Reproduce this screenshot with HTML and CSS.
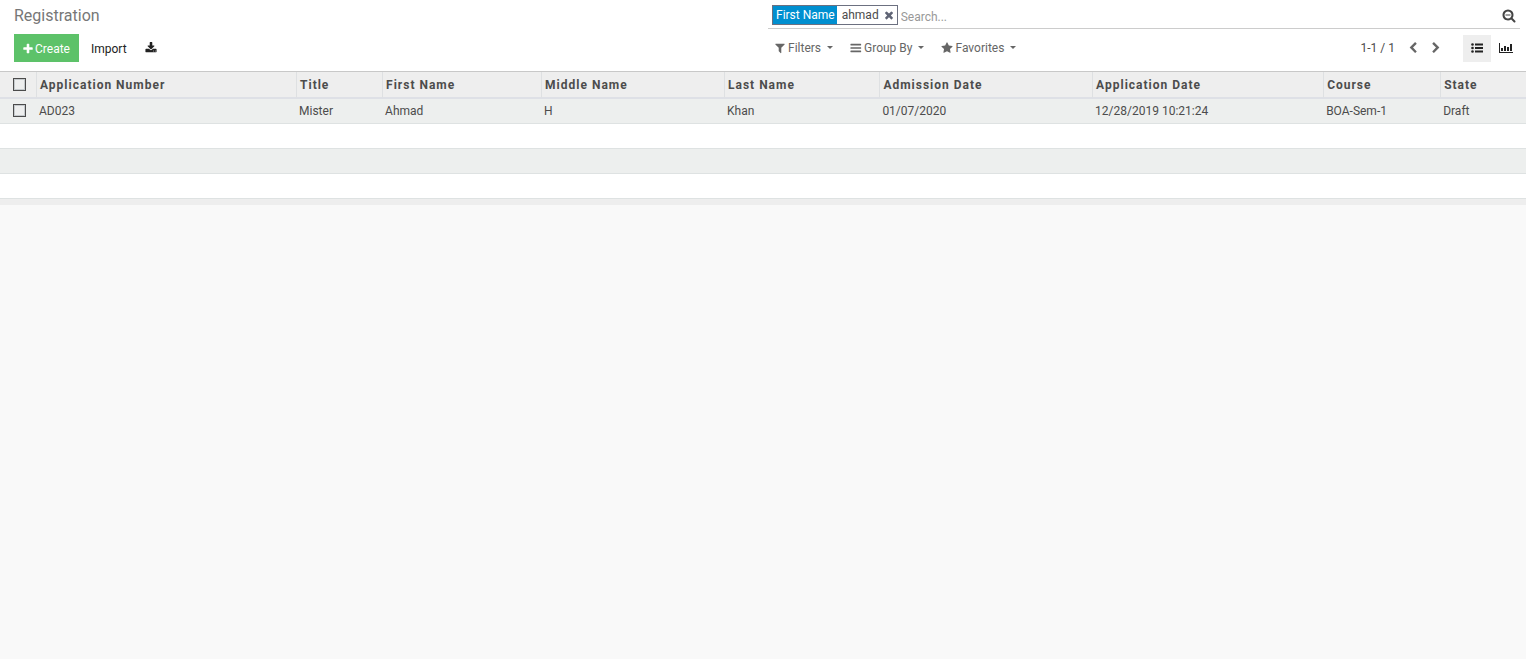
FILE: index.html
```html
<!DOCTYPE html>
<html lang="en">
<head>
<meta charset="utf-8">
<title>Registration</title>
<link rel="stylesheet" href="styles.css">
</head>
<body>
<header class="control-panel">
  <h1 class="title">Registration</h1>
  <div class="search">
    <div class="facet">
      <span class="facet-label">First Name</span>
      <span class="facet-value">ahmad</span>
      <button class="facet-remove" type="button" aria-label="Remove filter"><svg class="icon" viewBox="0 0 1792 1792"><path d="M1490 1322q0 40-28 68l-136 136q-28 28-68 28t-68-28l-294-294-294 294q-28 28-68 28t-68-28l-136-136q-28-28-28-68t28-68l294-294-294-294q-28-28-28-68t28-68l136-136q28-28 68-28t68 28l294 294 294-294q28-28 68-28t68 28l136 136q28 28 28 68t-28 68l-294 294 294 294q28 28 28 68z"/></svg></button>
    </div>
    <input class="search-input" type="text" placeholder="Search..." aria-label="Search">
    <button class="search-toggle" type="button" aria-label="Hide search options"><svg class="icon icon-large" viewBox="0 0 1792 1792"><path d="M1088 736v64q0 13-9.500 22.500t-22.500 9.500h-576q-13 0-22.500-9.500t-9.500-22.500v-64q0-13 9.500-22.500t22.500-9.500h576q13 0 22.500 9.500t9.500 22.500zm128 32q0-185-131.500-316.500t-316.500-131.500-316.500 131.500-131.500 316.500 131.500 316.500 316.500 131.500 316.500-131.500 131.500-316.500zm512 832q0 53-37.500 90.500t-90.500 37.500q-54 0-90-38l-343-342q-179 124-399 124-143 0-273.500-55.500t-225-150-150-225-55.500-273.500 55.500-273.500 150-225 225-150 273.500-55.500 273.500 55.500 225 150 150 225 55.500 273.500q0 220-124 399l343 343q37 37 37 90z"/></svg></button>
  </div>
  <div class="actions">
    <button class="btn btn-create" type="button"><svg class="icon" viewBox="0 0 1792 1792"><path d="M1600 736v192q0 40-28 68t-68 28h-416v416q0 40-28 68t-68 28h-192q-40 0-68-28t-28-68v-416h-416q-40 0-68-28t-28-68v-192q0-40 28-68t68-28h416v-416q0-40 28-68t68-28h192q40 0 68 28t28 68v416h416q40 0 68 28t28 68z"/></svg>Create</button>
    <button class="btn" type="button">Import</button>
    <button class="btn" type="button" aria-label="Export"><svg class="icon" viewBox="0 0 1792 1792"><path d="M1344 1344q0-26-19-45t-45-19-45 19-19 45 19 45 45 19 45-19 19-45zm256 0q0-26-19-45t-45-19-45 19-19 45 19 45 45 19 45-19 19-45zm128-224v320q0 40-28 68t-68 28h-1472q-40 0-68-28t-28-68v-320q0-40 28-68t68-28h465l135 136q58 56 136 56t136-56l136-136h464q40 0 68 28t28 68zm-325-569q17 41-14 70l-448 448q-18 19-45 19t-45-19l-448-448q-31-29-14-70 17-39 59-39h256v-448q0-26 19-45t45-19h256q26 0 45 19t19 45v448h256q42 0 59 39z"/></svg></button>
  </div>
  <div class="options">
    <div class="filters">
      <button class="dropdown" type="button"><svg class="icon" viewBox="0 0 1792 1792"><path d="M1595 295q17 41-14 70l-493 493v742q0 42-39 59-13 5-25 5-27 0-45-19l-256-256q-19-19-19-45v-486l-493-493q-31-29-14-70 17-39 59-39h1280q42 0 59 39z"/></svg>Filters<span class="caret"></span></button>
      <button class="dropdown" type="button"><svg class="icon" viewBox="0 0 1792 1792"><rect x="64" y="256" width="1600" height="256" rx="64"/><rect x="64" y="768" width="1600" height="256" rx="64"/><rect x="64" y="1280" width="1600" height="256" rx="64"/></svg>Group By<span class="caret"></span></button>
      <button class="dropdown" type="button"><svg class="icon" viewBox="0 0 1792 1792"><path d="M1728 647q0 22-26 48l-363 354 86 500q1 7 1 20 0 21-10.500 35.500t-30.500 14.500q-19 0-40-12l-449-236-449 236q-22 12-40 12-21 0-31.500-14.500t-10.500-35.500q0-6 2-20l86-500-364-354q-25-27-25-48 0-37 56-46l502-73 225-455q19-41 49-41t49 41l225 455 502 73q56 9 56 46z"/></svg>Favorites<span class="caret"></span></button>
    </div>
    <div class="pager">
      <span class="pager-count">1-1 / 1</span>
      <button class="pager-btn" type="button" aria-label="Previous"><svg class="icon" viewBox="0 0 1792 1792"><path d="M1427 301l-531 531 531 531q19 19 19 45t-19 45l-166 166q-19 19-45 19t-45-19l-742-742q-19-19-19-45t19-45l742-742q19-19 45-19t45 19l166 166q19 19 19 45t-19 45z"/></svg></button>
      <button class="pager-btn" type="button" aria-label="Next"><svg class="icon" viewBox="0 0 1792 1792"><path d="M1363 877l-742 742q-19 19-45 19t-45-19l-166-166q-19-19-19-45t19-45l531-531-531-531q-19-19-19-45t19-45l166-166q19-19 45-19t45 19l742 742q19 19 19 45t-19 45z"/></svg></button>
    </div>
    <div class="views">
      <button class="view-btn active" type="button" aria-label="List view"><svg class="icon" viewBox="0 0 12 12"><circle cx="1.500" cy="2.500" r="1.300"/><circle cx="1.500" cy="6" r="1.300"/><circle cx="1.500" cy="9.500" r="1.300"/><rect x="4" y="1.500" width="8" height="2"/><rect x="4" y="5" width="8" height="2"/><rect x="4" y="8.500" width="8" height="2"/></svg></button>
      <button class="view-btn" type="button" aria-label="Graph view"><svg class="icon icon-large" viewBox="0 0 14 14"><path d="M0 2h1v9h13v1H0zM2 7h2v3H2zM5 5h2v5H5zM8 6h2v4H8zM11 3h2v7h-2z"/></svg></button>
    </div>
  </div>
</header>
<main>
  <table class="list">
    <colgroup>
      <col class="col-select"><col class="col-number"><col class="col-title"><col class="col-first"><col class="col-middle"><col class="col-last"><col class="col-admission"><col class="col-application"><col class="col-course"><col>
    </colgroup>
    <thead>
      <tr>
        <th class="select"><input type="checkbox" aria-label="Select all"></th>
        <th>Application Number</th><th>Title</th><th>First Name</th><th>Middle Name</th><th>Last Name</th><th>Admission Date</th><th>Application Date</th><th>Course</th><th>State</th>
      </tr>
    </thead>
    <tbody>
      <tr>
        <td class="select"><input type="checkbox" aria-label="Select AD023"></td>
        <td>AD023</td><td>Mister</td><td>Ahmad</td><td>H</td><td>Khan</td><td>01/07/2020</td><td>12/28/2019 10:21:24</td><td>BOA-Sem-1</td><td>Draft</td>
      </tr>
      <tr><td colspan="10"></td></tr>
      <tr><td colspan="10"></td></tr>
      <tr><td colspan="10"></td></tr>
    </tbody>
    <tfoot><tr><td colspan="10"></td></tr></tfoot>
  </table>
</main>
</body>
</html>
```
FILE: styles.css
```css
* { box-sizing: border-box; }

body {
  margin: 0;
  background: #f9f9f9;
  color: #4c4c4c;
  font: 12px/18px Roboto, "Liberation Sans", sans-serif;
}

button, input { font: inherit; color: inherit; }

button {
  display: inline-flex;
  align-items: center;
  border: 0;
  padding: 0;
  background: none;
  cursor: pointer;
}

.icon {
  flex: none;
  width: 12px;
  height: 12px;
  fill: currentColor;
}

.icon-large { width: 14px; height: 14px; }

.control-panel {
  display: grid;
  grid-template-columns: 1fr 1fr;
  column-gap: 2px;
  row-gap: 5px;
  padding: 0 6px 9px 14px;
  background: #fff;
}

.title {
  margin: 0;
  padding-top: 4px;
  color: #777;
  font-size: 16px;
  font-weight: 400;
  line-height: 24px;
}

.search {
  display: flex;
  align-items: center;
  gap: 3px;
  padding: 5px 4px 3px;
  border-bottom: 1px solid #ccc;
}

.facet {
  display: flex;
  height: 20px;
  border: 1px solid #6c7080;
}

.facet-label {
  padding: 0 2px 0 3px;
  background: #008fd0;
  color: #fff;
}

.facet-value { padding: 0 4px 0 5px; }

.facet-remove { padding-right: 2px; color: #5f6475; }

.search-input {
  flex: 1;
  min-width: 0;
  height: 20px;
  padding: 3px 0 0;
  border: 0;
  outline: 0;
  background: none;
}

.search-input::placeholder { color: #999; }

.search-toggle { padding-top: 2px; color: #444; }

.actions, .options { display: flex; align-items: center; }

.btn {
  height: 28px;
  padding: 1px 12px 0;
  color: #222;
}

.btn + .btn:last-child { padding: 0 6px; }

.btn-create {
  gap: 1px;
  padding: 1px 9px 0 8px;
  background: #5dc269;
  color: #fff;
}

.filters { display: flex; flex: 1; gap: 17px; padding-left: 6px; }

.dropdown { color: #666; }

.dropdown .icon { margin-right: 2px; }

.caret {
  margin: 0 0 2px 6px;
  border: 3px solid transparent;
  border-top-color: currentColor;
  border-bottom: 0;
}

.pager { display: flex; align-items: center; }

.pager-count { padding-right: 12px; }

.pager-btn { padding-right: 11px; color: #666; }

.views { display: flex; gap: 1px; padding-left: 10px; }

.view-btn {
  justify-content: center;
  width: 28px;
  height: 27px;
  color: #222;
}

.view-btn.active { background: #eee; }

.list {
  width: 100%;
  border-collapse: separate;
  border-spacing: 0;
  border-top: 1px solid #c8c8c8;
  table-layout: fixed;
}

.col-select { width: 36px; }
.col-number { width: 17.04%; }
.col-title { width: 5.64%; }
.col-first { width: 10.42%; }
.col-middle { width: 11.99%; }
.col-last { width: 10.18%; }
.col-admission { width: 13.94%; }
.col-application { width: 15.14%; }
.col-course { width: 7.67%; }

.list th {
  height: 27px;
  padding: 0 3px;
  border-left: 1px solid #dee0e2;
  border-bottom: 2px solid #dee0e6;
  background: #eee;
  font-weight: 700;
  letter-spacing: 1px;
  text-align: left;
}

.list td {
  height: 25px;
  padding: 0 3px;
  border-bottom: 1px solid #dee2e2;
  background: #fff;
}

.list tbody tr:nth-child(odd) td { background: #edefee; }

.list .select { padding: 0 0 0 13px; border-left: 0; }

.list td.select { padding-bottom: 1px; }

.list tfoot td { height: 6px; padding: 0; border: 0; background: #eee; }

.list input {
  display: block;
  appearance: none;
  width: 13px;
  height: 13px;
  margin: 0;
  border: 1px solid #4b4b4b;
  background: #edeeee;
  box-shadow: inset 0 0 0 1px #c5cacd;
}

.list input:checked { background: #4b4b4b; }
```
